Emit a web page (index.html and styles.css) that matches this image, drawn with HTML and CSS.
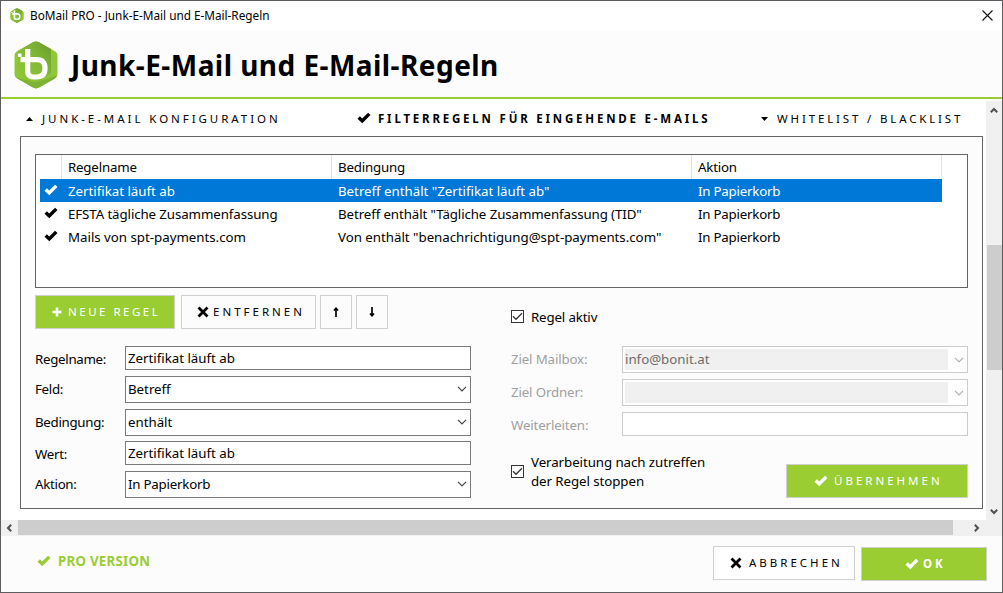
FILE: index.html
```html
<!DOCTYPE html>
<html lang="de">
<head>
<meta charset="utf-8">
<title>BoMail PRO - Junk-E-Mail und E-Mail-Regeln</title>
<link rel="stylesheet" href="styles.css">
</head>
<body>
<svg class="defs" width="0" height="0">
  <defs>
    <linearGradient id="leaf" x1="0" y1="1" x2="1" y2="0"><stop offset="0" stop-color="#93ca32"/><stop offset=".55" stop-color="#83b936"/><stop offset="1" stop-color="#689c2c"/></linearGradient>
    <symbol id="logo" viewBox="0 0 44 48">
      <path d="M19 1.2Q22 -.4 25 1.2L40.500 10Q43.500 11.700 43.500 15V33Q43.500 36 40.500 37.800L25 46.600Q22 48.200 19 46.600L3.500 37.800Q.5 36 .5 33V15Q.5 11.700 3.500 10Z" fill="#8fc63a"/>
      <path d="M19 1.200Q22 -.4 25 1.200L37 8V32L22 43L4 35V10Z" fill="url(#leaf)"/>
      <path d="M2 36.500L22 41.500L42.500 34.500Q42.500 36.600 40.500 37.800L25 46.600Q22 48.200 19 46.600Z" fill="#7db233"/>
      <path d="M13.700 8V30Q13.700 36 19.500 36H22.500Q31 36 31 27.300T22.500 18.700H6.500" fill="none" stroke="#fff" stroke-width="5.200"/>
      <path d="M4 12.500h3.500v3.500h-3.500z" fill="#fff"/>
    </symbol>
    <symbol id="check" viewBox="0 0 14 12"><path d="M.5 6.700L2.900 4.300L5.200 6.500L11.100.8L13.500 3.100L5.300 11.200Z" fill="currentColor"/></symbol>
    <symbol id="cross" viewBox="0 0 12 12"><path d="M1.500 1.500L10.500 10.500M10.500 1.500L1.500 10.500" stroke="currentColor" stroke-width="2.800"/></symbol>
    <symbol id="plus" viewBox="0 0 10 10"><path d="M5 .5V9.500M.5 5H9.500" stroke="currentColor" stroke-width="2.600"/></symbol>
    <symbol id="arrow" viewBox="0 0 8 10"><path d="M4 10V1.500M2 3.500L4 1.300L6 3.500" fill="none" stroke="currentColor" stroke-width="1.700"/></symbol>
    <symbol id="chevron" viewBox="0 0 10 6"><path d="M1 .8L5 4.800L9 .8" fill="none" stroke="currentColor" stroke-width="1.200"/></symbol>
    <symbol id="caret" viewBox="0 0 8 6"><path d="M.8 .8L4 4L7.200 .8" fill="none" stroke="currentColor" stroke-width="2"/></symbol>
    <symbol id="tick" viewBox="0 0 11 11"><path d="M1 5.300L4 8.300L10 2.300" fill="none" stroke="#333" stroke-width="1.300"/></symbol>
  </defs>
</svg>
<div class="window">
  <div class="titlebar">
    <svg class="app-icon"><use href="#logo"/></svg>
    <span class="title">BoMail PRO - Junk-E-Mail und E-Mail-Regeln</span>
    <svg class="close" viewBox="0 0 11 11"><path d="M.5 .5L10.500 10.500M10.500 .5L.5 10.500" stroke="#111" stroke-width="1.100"/></svg>
  </div>
  <header class="header">
    <svg class="logo"><use href="#logo"/></svg>
    <h1>Junk-E-Mail und E-Mail-Regeln</h1>
  </header>
  <div class="scroll-area">
    <main class="content">
      <nav class="tabs">
        <span class="tab tab-junk"><i class="tri up"></i><span>JUNK-E-MAIL KONFIGURATION</span></span>
        <span class="tab tab-filter"><svg class="i-check"><use href="#check"/></svg><span>FILTERREGELN FÜR EINGEHENDE E-MAILS</span></span>
        <span class="tab tab-white"><i class="tri down"></i><span>WHITELIST / BLACKLIST</span></span>
      </nav>
      <section class="panel">
        <div class="list">
          <div class="row head"><span></span><span>Regelname</span><span>Bedingung</span><span>Aktion</span></div>
          <div class="row selected"><span><svg class="i-check"><use href="#check"/></svg></span><span>Zertifikat läuft ab</span><span>Betreff enthält "Zertifikat läuft ab"</span><span class="action">In Papierkorb</span></div>
          <div class="row"><span><svg class="i-check"><use href="#check"/></svg></span><span class="tight">EFSTA tägliche Zusammenfassung</span><span class="tight">Betreff enthält "Tägliche Zusammenfassung (TID"</span><span class="action">In Papierkorb</span></div>
          <div class="row"><span><svg class="i-check"><use href="#check"/></svg></span><span>Mails von spt-payments.com</span><span>Von enthält "benachrichtigung@spt-payments.com"</span><span class="action">In Papierkorb</span></div>
        </div>
        <div class="columns">
          <div class="left">
            <div class="toolbar">
              <button class="btn green new"><svg class="i-plus"><use href="#plus"/></svg><span>NEUE REGEL</span></button>
              <button class="btn remove"><svg class="i-cross"><use href="#cross"/></svg><span>ENTFERNEN</span></button>
              <button class="btn move"><svg class="i-arrow"><use href="#arrow"/></svg></button>
              <button class="btn move"><svg class="i-arrow flip"><use href="#arrow"/></svg></button>
            </div>
            <div class="form">
              <label class="low">Regelname:</label><div class="field">Zertifikat läuft ab</div>
              <label>Feld:</label><div class="field combo">Betreff<svg class="i-chev"><use href="#chevron"/></svg></div>
              <label>Bedingung:</label><div class="field combo">enthält<svg class="i-chev"><use href="#chevron"/></svg></div>
              <label class="low">Wert:</label><div class="field">Zertifikat läuft ab</div>
              <label>Aktion:</label><div class="field combo action">In Papierkorb<svg class="i-chev"><use href="#chevron"/></svg></div>
            </div>
          </div>
          <div class="right">
            <div class="option active"><svg class="box"><use href="#tick"/></svg><span>Regel aktiv</span></div>
            <div class="form disabled">
              <label>Ziel Mailbox:</label><div class="field combo"><span class="value">info@bonit.at</span><svg class="i-chev"><use href="#chevron"/></svg></div>
              <label>Ziel Ordner:</label><div class="field combo"><span class="value"></span><svg class="i-chev"><use href="#chevron"/></svg></div>
              <label class="low">Weiterleiten:</label><div class="field"></div>
            </div>
            <div class="bottom">
              <div class="option stop"><svg class="box"><use href="#tick"/></svg><span>Verarbeitung nach zutreffen<br>der Regel stoppen</span></div>
              <button class="btn green apply"><svg class="i-check"><use href="#check"/></svg><span>ÜBERNEHMEN</span></button>
            </div>
          </div>
        </div>
      </section>
    </main>
    <div class="vbar"><svg class="i-caret flip"><use href="#caret"/></svg><div class="thumb"></div><svg class="i-caret"><use href="#caret"/></svg></div>
  </div>
  <div class="hbar"><svg class="i-caret west"><use href="#caret"/></svg><div class="thumb"></div><svg class="i-caret east"><use href="#caret"/></svg></div>
  <footer class="footer">
    <div class="pro"><svg class="i-check"><use href="#check"/></svg><span>PRO VERSION</span></div>
    <button class="btn cancel"><svg class="i-cross"><use href="#cross"/></svg><span>ABBRECHEN</span></button>
    <button class="btn green ok"><svg class="i-check"><use href="#check"/></svg><span>OK</span></button>
  </footer>
</div>
</body>
</html>
```
FILE: styles.css
```css
* { box-sizing: border-box; }
body { margin: 0; font: 13.3px/19px "Noto Sans", "Open Sans", sans-serif; letter-spacing: -.02px; color: #000; overflow: hidden; }
svg { display: block; flex: none; }
.defs { position: absolute; }
.window { width: 1003px; height: 593px; border: 1px solid #5d5d60; background: #fcfcfc; display: flex; flex-direction: column; }
.titlebar { height: 30px; flex: none; background: #fff; display: flex; align-items: center; padding: 0 9px 2px 8px; }
.app-icon { width: 16px; height: 15px; }
.title { flex: 1; margin-left: 5px; font-size: 11.8px; white-space: nowrap; }
.close { width: 11px; height: 11px; }
.header { height: 68px; flex: none; border-bottom: 2px solid #9acd32; display: flex; align-items: center; padding: 1px 0 0 13px; }
.logo { width: 44px; height: 48px; }
h1 { margin: 0 0 0 13px; font-size: 28px; line-height: 36px; font-weight: 700; letter-spacing: .45px; white-space: nowrap; }
.scroll-area { height: 421px; flex: none; display: flex; background: #fff; }
.content { width: 985px; padding: 9px 3px 0 19px; }
.tabs { height: 28px; display: flex; align-items: flex-start; white-space: nowrap; font-size: 11.5px; }
.tab { display: flex; align-items: center; height: 20px; }
.tab-junk { width: 337px; padding-left: 6px; letter-spacing: 2.950px; }
.tab-filter { width: 404px; font-weight: 700; letter-spacing: 2.800px; }
.tab-white { letter-spacing: 2.850px; }
.tab-filter .i-check { margin-right: 7px; }
.tri { width: 7px; height: 4px; margin: 2px 9px 0 0; background: #000; }
.up { clip-path: polygon(50% 0, 100% 100%, 0 100%); }
.down { clip-path: polygon(0 0, 100% 0, 50% 100%); }
.panel { height: 373px; border: 1px solid #646464; background: #fcfcfc; padding: 17px 14px 0; }
.list { height: 134px; border: 1px solid #646464; background: #fff; padding: 0 25px 0 4px; }
.row { display: grid; grid-template-columns: 22px 270px 360px 250px; height: 23px; line-height: 25px; white-space: nowrap; }
.row > span { padding-left: 6px; }
.row > span:first-child { padding: 5px 0 0 4px; }
.row.head { height: 24px; line-height: 24px; letter-spacing: -.2px; }
.head > span { border-right: 1px solid #e3e3e3; }
.selected { background: #0078d7; color: #fff; }
.row .tight { letter-spacing: -.1px; }
.action { letter-spacing: -.22px; }
.i-check { width: 14px; height: 12px; }
.i-plus { width: 10px; height: 10px; }
.i-cross { width: 12px; height: 12px; }
.i-arrow { width: 8px; height: 10px; }
.i-chev { width: 10px; height: 6px; color: #444; }
.i-caret { width: 8px; height: 6px; color: #505050; }
.flip { transform: rotate(180deg); }
.columns { display: flex; gap: 40px; padding-top: 7px; }
.left { width: 436px; }
.toolbar { display: flex; gap: 4px; }
.btn { height: 34px; border: 1px solid #d0d0d0; background: #fcfcfc; color: #000; font: 11.5px/16px "Noto Sans", "Open Sans", sans-serif; padding: 0; display: flex; align-items: center; justify-content: flex-start; white-space: nowrap; letter-spacing: 3px; }
.green { background: #9acd32; color: #fff; }
.new { width: 140px; margin-right: 2px; padding-left: 16px; gap: 6px; letter-spacing: 2.500px; }
.remove { width: 135px; padding-left: 15px; gap: 4px; }
.move { width: 32px; padding-left: 11px; }
.form { display: grid; grid-template-columns: 90px 346px; row-gap: 6px; margin-top: 17px; }
.form label { align-self: center; padding-bottom: 1px; letter-spacing: -.3px; }
.form .low { padding: 2px 0 0; }
.field { height: 24px; border: 1px solid #7a7a7a; background: #fff; padding: 1px 3px 0 2px; display: flex; align-items: center; justify-content: space-between; white-space: nowrap; }
.field.combo { height: 27px; padding: 0 3px 1px 2px; }
.left .field:nth-of-type(4) { margin-top: -1px; }
.right { width: 457px; }
.option { display: flex; align-items: center; gap: 7px; }
.box { width: 13px; height: 13px; margin-bottom: 2px; border: 1px solid #333; background: #fff; }
.active { height: 20px; margin: 12px 0 19px; letter-spacing: -.15px; }
.form.disabled { grid-template-columns: 111px 346px; margin: 0; color: #a0a0a0; }
.disabled label { letter-spacing: -.15px; }
.disabled .field { border-color: #ccc; }
.disabled .field.combo { padding: 0 3px 0 2px; }
.disabled .i-chev { color: #b0b0b0; }
.value { width: 323px; height: 21px; padding-top: 1px; background: #f0f0f0; color: #6d6d6d; }
.bottom { display: flex; justify-content: space-between; margin-top: 17px; }
.stop { height: 38px; letter-spacing: -.07px; }
.apply { width: 182px; margin-top: 11px; padding-left: 27px; gap: 6px; }
.vbar { width: 16px; margin-top: 2px; background: #f0f0f0; display: flex; flex-direction: column; align-items: center; padding: 6px 0 5px; }
.vbar .thumb { width: 15px; height: 125px; margin: 132px 0 auto; background: #cdcdcd; }
.hbar { height: 16px; flex: none; background: #f0f0f0; display: flex; align-items: center; padding: 0 21px 0 4px; }
.hbar .thumb { width: 935px; height: 15px; margin: 0 auto 1px 5px; background: #cdcdcd; }
.west { transform: rotate(90deg); }
.east { transform: rotate(-90deg); }
.footer { flex: 1; display: flex; padding: 10px 15px 0 36px; }
.pro { display: flex; align-items: center; height: 30px; flex: 1; gap: 7px; color: #9acd32; font-weight: 700; letter-spacing: .24px; }
.cancel { width: 142px; margin-right: 6px; padding-left: 16px; gap: 7px; background: #fff; }
.ok { width: 126px; margin-top: 1px; padding-left: 43px; gap: 4px; font-weight: 700; letter-spacing: 2.800px; }
```
